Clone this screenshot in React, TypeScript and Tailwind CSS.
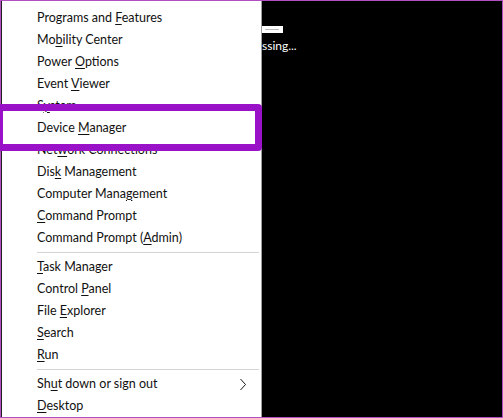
import React from "react";

type Item = { pre: string; key: string; post: string; sub?: boolean };

const groups: Item[][] = [
  [
    { pre: "Programs and ", key: "F", post: "eatures" },
    { pre: "Mo", key: "b", post: "ility Center" },
    { pre: "Power ", key: "O", post: "ptions" },
    { pre: "Event ", key: "V", post: "iewer" },
    { pre: "S", key: "y", post: "stem" },
    { pre: "Device ", key: "M", post: "anager" },
    { pre: "Net", key: "w", post: "ork Connections" },
    { pre: "Dis", key: "k", post: " Management" },
    { pre: "Computer Mana", key: "g", post: "ement" },
    { pre: "", key: "C", post: "ommand Prompt" },
    { pre: "Command Prompt (", key: "A", post: "dmin)" },
  ],
  [
    { pre: "", key: "T", post: "ask Manager" },
    { pre: "Control ", key: "P", post: "anel" },
    { pre: "File ", key: "E", post: "xplorer" },
    { pre: "", key: "S", post: "earch" },
    { pre: "", key: "R", post: "un" },
  ],
  [
    { pre: "Sh", key: "u", post: "t down or sign out", sub: true },
    { pre: "", key: "D", post: "esktop" },
  ],
];

function MenuRow({ item }: { item: Item }) {
  return (
    <div className="flex h-[22px] items-center pl-[35px] pr-[12px]">
      <span className="flex-1 whitespace-nowrap">
        {item.pre}
        <u className="decoration-1 underline-offset-[2px]">{item.key}</u>
        {item.post}
      </span>
      {item.sub && (
        <svg width="8" height="13" viewBox="0 0 8 13" className="mr-[2px]">
          <polyline points="1.5,1 6.5,6.5 1.5,12" fill="none" stroke="#1a1a1a" strokeWidth="1" />
        </svg>
      )}
    </div>
  );
}

function QuickLinkMenu() {
  return (
    <div
      className="relative flex w-[260px] flex-col border-r border-[#a0a0a0] bg-white pt-[6px] text-[12.5px] text-[#111]"
      style={{ fontFamily: 'Lato, "Noto Sans", sans-serif' }}
    >
      {groups.map((group, gi) => (
        <div key={gi}>
          {gi > 0 && <div className="mx-[2px] my-[3px] ml-[35px] h-px bg-[#d4d4d4]" />}
          {group.map((item) => (
            <MenuRow key={item.pre + item.key + item.post} item={item} />
          ))}
        </div>
      ))}
    </div>
  );
}

export default function App() {
  return (
    <div className="h-[418px] w-[503px] border border-[#b24fc0] bg-black">
      <div className="relative flex h-full">
        <div className="w-px bg-[#222]" />
        <QuickLinkMenu />
        {/* console window behind the menu */}
        <div className="flex-1 pt-[25px] text-[12px] text-white" style={{ fontFamily: 'Lato, sans-serif' }}>
          <div className="flex h-[7px] w-[21px] items-center bg-white pl-[3px]">
            <div className="h-px w-[14px] bg-[#bbb]" />
          </div>
          <div className="mt-[6px] leading-[14px]">ssing...</div>
        </div>
        {/* highlight around Device Manager */}
        <div className="absolute left-[-5px] top-[103px] h-[47px] w-[266px] rounded-[4px] border-[7px] border-[#9a12c8]" />
      </div>
    </div>
  );
}
